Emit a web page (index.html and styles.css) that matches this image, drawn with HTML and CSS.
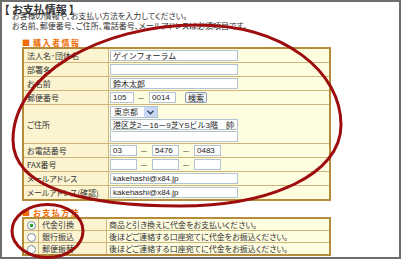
FILE: index.html
```html
<!DOCTYPE html>
<html lang="ja">
<head>
    <meta charset="UTF-8">
    <title>お支払情報</title>
    <link rel="stylesheet" href="styles.css">
</head>
<body>
    <div class="frame">
        <h1 class="title">【 お支払情報 】</h1>
        <p class="intro">お客様の情報や、お支払い方法を入力してください。<br>お名前、郵便番号、ご住所、電話番号、メールアドレスは必須項目です。</p>

        <!-- 購入者情報 -->
        <h2 class="section"><span class="mark">■</span>購入者情報</h2>
        <table class="form-table">
            <tr>
                <th>法人名･団体名</th>
                <td><div class="cell"><input class="text wide" type="text" value="ゲインフォーラム"></div></td>
            </tr>
            <tr>
                <th>部署名</th>
                <td><div class="cell"><input class="text wide" type="text" value=""></div></td>
            </tr>
            <tr>
                <th>お名前</th>
                <td><div class="cell"><input class="text wide" type="text" value="鈴木太郎"></div></td>
            </tr>
            <tr>
                <th>郵便番号</th>
                <td>
                    <div class="cell">
                        <input class="text zip1" type="text" value="105">
                        <span class="dash">－</span>
                        <input class="text zip2" type="text" value="0014">
                        <button class="search" type="button">検索</button>
                    </div>
                </td>
            </tr>
            <tr>
                <th>ご住所</th>
                <td>
                    <div class="cell-stack">
                        <span class="select"><span class="select-value">東京都</span><span class="select-arrow"><svg width="7" height="5" viewBox="0 0 7 5"><path d="M0.5 0.8 L3.5 3.8 L6.5 0.8" fill="none" stroke="#2a3a66" stroke-width="1.3"/></svg></span></span>
                        <input class="text wide" type="text" value="港区芝2－16－9芝YSビル3階　帥共">
                        <input class="text wide" type="text" value="">
                    </div>
                </td>
            </tr>
            <tr>
                <th>お電話番号</th>
                <td>
                    <div class="cell">
                        <input class="text tel" type="text" value="03">
                        <span class="dash">－</span>
                        <input class="text tel" type="text" value="5476">
                        <span class="dash">－</span>
                        <input class="text tel" type="text" value="0483">
                    </div>
                </td>
            </tr>
            <tr>
                <th>FAX番号</th>
                <td>
                    <div class="cell">
                        <input class="text tel" type="text" value="">
                        <span class="dash">－</span>
                        <input class="text tel" type="text" value="">
                        <span class="dash">－</span>
                        <input class="text tel" type="text" value="">
                    </div>
                </td>
            </tr>
            <tr>
                <th>メールアドレス</th>
                <td><div class="cell"><input class="text wide" type="text" value="kakehashi@x84.jp"></div></td>
            </tr>
            <tr>
                <th>メールアドレス(確認)</th>
                <td><div class="cell"><input class="text wide" type="text" value="kakehashi@x84.jp"></div></td>
            </tr>
        </table>

        <!-- お支払方法 -->
        <h2 class="section"><span class="mark">■</span>お支払方法</h2>
        <table class="pay-table">
            <tr>
                <td class="radio-cell"><span class="radio checked"></span></td>
                <th>代金引換</th>
                <td>商品と引き換えに代金をお支払いください。</td>
            </tr>
            <tr>
                <td class="radio-cell"><span class="radio"></span></td>
                <th>銀行振込</th>
                <td>後ほどご連絡する口座宛てに代金をお振込ください。</td>
            </tr>
            <tr>
                <td class="radio-cell"><span class="radio"></span></td>
                <th>郵便振替</th>
                <td>後ほどご連絡する口座宛てに代金をお振込ください。</td>
            </tr>
        </table>
    </div>

    <!-- red marker circles drawn over the form -->
    <svg class="marks" width="402" height="261" viewBox="0 0 402 261">
        <path d="M13 140 C13 75 100 25 197 25 C285 25 341 72 341 125 C341 175 270 206 180 206 C90 206 13 190 13 140 Z" fill="none" stroke="#9e0d0d" stroke-width="3"/>
        <ellipse cx="47.5" cy="231" rx="35.5" ry="26.5" fill="none" stroke="#9e0d0d" stroke-width="3"/>
    </svg>
</body>
</html>
```

FILE: styles.css
```css
body {
    margin: 0;
    position: relative;
    font-family: "Noto Sans CJK JP", sans-serif;
    font-size: 8px;
    font-feature-settings: "palt";
    color: #333;
    background-color: #fff;
}

.frame {
    width: 401px;
    height: 259px;
    box-sizing: border-box;
    border: 2px solid #6e6e6e;
}

.title {
    margin: 0 0 -4px;
    padding: 1px 0 0 2px;
    font-size: 11px;
    font-weight: bold;
    line-height: 12px;
    color: #333;
}

.intro {
    margin: 0;
    padding-left: 10px;
    line-height: 10px;
}

.section {
    margin: 7px 0 0 20px;
    font-size: 8px;
    line-height: 9px;
    font-weight: bold;
    letter-spacing: 1.5px;
    color: #f06a00;
}

.mark {
    margin-right: 3px;
    letter-spacing: 0;
}

.form-table, .pay-table {
    margin-left: 20px;
    width: 309px;
    border-collapse: collapse;
    border: 2px solid #b48c3c;
}

.form-table th, .form-table td,
.pay-table th, .pay-table td {
    border: 1px solid #cfb579;
    padding: 0;
    font-weight: normal;
    text-align: left;
    white-space: nowrap;
}

.form-table th {
    width: 81px;
    padding-left: 3px;
    background-color: #fcf4d0;
}

.form-table td {
    background-color: #fffde0;
}

.cell {
    display: flex;
    align-items: center;
    height: 13px;
}

.cell-stack {
    display: flex;
    flex-direction: column;
    gap: 1px;
    padding: 1px 0;
}

.text {
    height: 11px;
    box-sizing: border-box;
    margin: 0 0 0 1px;
    padding: 0 2px;
    border: 1px solid #b3c3d6;
    background-color: #fff;
    font-family: "Liberation Sans", "Noto Sans CJK JP", sans-serif;
    font-size: 8px;
    color: #222;
    outline: none;
}

.wide { width: 128px; }
.zip1 { width: 24px; }
.zip2 { width: 27px; }
.tel { width: 27px; }

.dash {
    width: 14px;
    text-align: center;
    color: #555;
}

.search {
    height: 11px;
    width: 22px;
    margin-left: 9px;
    padding: 0;
    border: 1px solid #8a9ab4;
    border-radius: 2px;
    background-color: #f2f4f8;
    font-family: "Noto Sans CJK JP", sans-serif;
    font-size: 8px;
    line-height: 9px;
    color: #222;
}

.select {
    display: flex;
    width: 48px;
    height: 12px;
    margin-left: 1px;
    box-sizing: border-box;
    border: 1px solid #b3c3d6;
    background-color: #fff;
}

.select-value {
    flex: 1;
    padding-left: 3px;
    line-height: 10px;
}

.select-arrow {
    width: 13px;
    display: flex;
    align-items: center;
    justify-content: center;
    background-color: #c9d8f2;
}

.pay-table th, .pay-table td {
    height: 11px;
    line-height: 10px;
    background-color: #fffde0;
}

.pay-table th {
    width: 64px;
    padding-left: 3px;
    background-color: #fcf4d0;
}

.pay-table td {
    padding-left: 2px;
}

.pay-table .radio-cell {
    width: 14px;
    padding: 0;
    text-align: center;
    background-color: #fcf4d0;
}

.radio {
    display: inline-block;
    width: 9px;
    height: 9px;
    box-sizing: border-box;
    margin-top: 1px;
    vertical-align: top;
    border: 1px solid #7c8ea8;
    border-radius: 50%;
    background-color: #fff;
}

.radio.checked {
    background: radial-gradient(circle, #2fa83a 0, #2fa83a 1.6px, #fff 2.2px);
}

.marks {
    position: absolute;
    top: 0;
    left: 0;
    pointer-events: none;
}
```
